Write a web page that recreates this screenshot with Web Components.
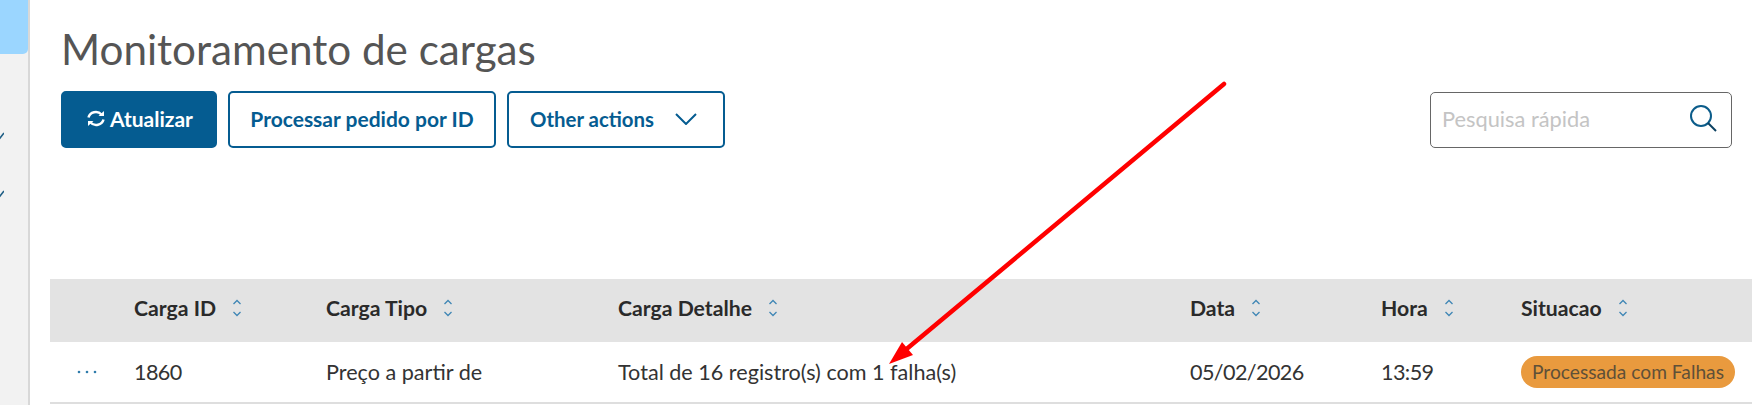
<!DOCTYPE html>
<html lang="pt">
<head>
<meta charset="utf-8">
<title>Monitoramento de cargas</title>
<style>
  html, body { margin: 0; height: 405px; overflow: hidden; background: #fff; }
  body { font-family: Lato, "Open Sans", sans-serif; }
  .num { letter-spacing: -0.6px; }
</style>
</head>
<body>
<app-shell>
  <side-bar slot="side"></side-bar>
  <page-head title-text="Monitoramento de cargas">
    <action-button slot="actions" kind="solid" icon="sync">Atualizar</action-button>
    <action-button slot="actions" wide="268">Processar pedido por ID</action-button>
    <action-button slot="actions" icon="caret" wide="218">Other actions</action-button>
    <search-box slot="search" placeholder="Pesquisa rápida"></search-box>
  </page-head>
  <cargas-table>
    <table-head slot="head">
      <sort-col>Carga ID</sort-col>
      <sort-col>Carga Tipo</sort-col>
      <sort-col>Carga Detalhe</sort-col>
      <sort-col>Data</sort-col>
      <sort-col>Hora</sort-col>
      <sort-col>Situacao</sort-col>
    </table-head>
    <table-row slot="rows">
      <span class="num">1860</span>
      <span>Preço a partir de</span>
      <span>Total de 16 registro(s) com 1 falha(s)</span>
      <span class="num">05/02/2026</span>
      <span class="num">13:59</span>
      <status-badge>Processada com Falhas</status-badge>
    </table-row>
  </cargas-table>
</app-shell>
<red-arrow></red-arrow>

<script>
// columns shared by header and rows
const COLS = '84px 192px 292px 572px 191px 140px 1fr';

class AppShell extends HTMLElement {
  constructor() {
    super();
    this.attachShadow({ mode: 'open' }).innerHTML = `
      <style>
        :host { display: flex; width: 1752px; height: 405px; }
        main { flex: 1; min-width: 0; display: flex; flex-direction: column; padding-left: 20px; }
      </style>
      <slot name="side"></slot>
      <main><slot></slot></main>`;
  }
}

class SideBar extends HTMLElement {
  constructor() {
    super();
    const tick = `<svg width="4" height="8" viewBox="0 0 4 8"><path d="M-4 2 L0 6 L4 1" fill="none" stroke="#1f5f86" stroke-width="1.6"/></svg>`;
    this.attachShadow({ mode: 'open' }).innerHTML = `
      <style>
        :host { display: flex; flex-direction: column; flex: none; box-sizing: border-box; width: 30px; height: 405px;
                background: #f2f2f2; border-right: 2px solid #d8d8d8; }
        .active { height: 54px; background: #9bd6ff; border-bottom-right-radius: 5px; }
        svg { display: block; margin-bottom: 50px; }
        svg:first-of-type { margin-top: 78px; }
      </style>
      <div class="active"></div>${tick}${tick}`;
  }
}

class PageHead extends HTMLElement {
  constructor() {
    super();
    this.attachShadow({ mode: 'open' }).innerHTML = `
      <style>
        :host { display: block; height: 279px; padding: 0 20px 0 11px; box-sizing: border-box; }
        h1 { margin: 0; padding-top: 25px; height: 91px; box-sizing: border-box; font: 400 42.2px/47px Lato, sans-serif; color: #555; }
        .bar { display: flex; justify-content: space-between; }
        .actions { display: flex; gap: 11px; }
      </style>
      <h1></h1>
      <div class="bar">
        <div class="actions"><slot name="actions"></slot></div>
        <slot name="search"></slot>
      </div>`;
    this.shadowRoot.querySelector('h1').textContent = this.getAttribute('title-text');
  }
}

class ActionButton extends HTMLElement {
  constructor() {
    super();
    const icon = this.getAttribute('icon');
    const solid = this.getAttribute('kind') === 'solid';
    const wide = this.getAttribute('wide') || 156;
    let svg = '';
    if (icon === 'sync') {
      svg = `<svg width="22" height="19" viewBox="0 0 22 18" fill="none" stroke="#fff" stroke-width="2.500">
        <path d="M3.5 8 A7.5 7 0 0 1 16.5 5"/><path d="M18.500 10 A7.500 7 0 0 1 5.500 13"/>
        <path d="M13.500 6.500 H19 V1.500 Z" fill="#fff" stroke="none"/><path d="M8.500 11.500 H3 V16.500 Z" fill="#fff" stroke="none"/>
      </svg>`;
    }
    const caret = icon === 'caret'
      ? `<svg width="22" height="12" viewBox="0 0 22 12" fill="none" stroke="#055c91" stroke-width="2"><path d="M1 1 L11 11 L21 1"/></svg>` : '';
    this.attachShadow({ mode: 'open' }).innerHTML = `
      <style>
        :host { display: block; }
        button { box-sizing: border-box; width: ${wide}px; height: 57px; display: flex; align-items: center;
                 justify-content: ${caret ? 'flex-start' : 'center'};
                 gap: ${caret ? 21 : 3}px; padding: 0 0 2px ${caret ? 21 : 0}px; border-radius: 5px; border: 2px solid #055c91; cursor: pointer;
                 font: 700 ${caret ? 20.4 : 21}px Lato, sans-serif;
                 background: ${solid ? '#055c91' : '#fff'}; color: ${solid ? '#fff' : '#055c91'}; }
      </style>
      <button>${svg}<slot></slot>${caret}</button>`;
  }
}

class SearchBox extends HTMLElement {
  constructor() {
    super();
    this.attachShadow({ mode: 'open' }).innerHTML = `
      <style>
        :host { display: flex; box-sizing: border-box; width: 302px; height: 56px; align-items: center; padding: 0 14px 4px 11px;
                border: 1px solid #666; border-radius: 5px; margin-top: 1px; }
        input { flex: 1; min-width: 0; border: 0; outline: 0; padding: 0; font: 400 21.8px Lato, sans-serif; color: #333; }
        input::placeholder { color: #c4c4c4; opacity: 1; }
        svg { flex: none; }
      </style>
      <input>
      <svg width="28" height="28" viewBox="0 0 28 28" fill="none" stroke="#0b5c8a" stroke-width="2">
        <circle cx="12" cy="12" r="10"/><path d="M19 19 L27 27" stroke="#0b4060"/>
      </svg>`;
    this.shadowRoot.querySelector('input').placeholder = this.getAttribute('placeholder');
  }
}

class CargasTable extends HTMLElement {
  constructor() {
    super();
    this.attachShadow({ mode: 'open' }).innerHTML = `
      <style>:host { display: block; }</style>
      <slot name="head"></slot><slot name="rows"></slot>`;
  }
}

class TableHead extends HTMLElement {
  constructor() {
    super();
    this.attachShadow({ mode: 'open' }).innerHTML = `
      <style>
        :host { display: grid; grid-template-columns: ${COLS}; align-items: center; height: 63px; box-sizing: border-box; padding-bottom: 6px;
                background: #e3e3e3; font: 700 21.2px Lato, sans-serif; color: #2a2a2a; }
      </style>
      <span></span><slot></slot>`;
  }
}

class SortCol extends HTMLElement {
  constructor() {
    super();
    this.attachShadow({ mode: 'open' }).innerHTML = `
      <style>
        :host { display: flex; align-items: center; gap: 16px; }
        svg { flex: none; }
      </style>
      <slot></slot>
      <svg width="10" height="18" viewBox="0 0 10 18" fill="none" stroke="#3f86b5" stroke-width="1.300">
        <path d="M1.500 5 L5 1.500 L8.500 5"/><path d="M1.500 13 L5 16.500 L8.500 13"/>
      </svg>`;
  }
}

class TableRow extends HTMLElement {
  constructor() {
    super();
    this.attachShadow({ mode: 'open' }).innerHTML = `
      <style>
        :host { display: grid; grid-template-columns: ${COLS}; align-items: center; height: 62px; box-sizing: border-box; padding-bottom: 1px;
                border-bottom: 2px solid #dedede; font: 400 21.6px Lato, sans-serif; color: #333; }
        svg { display: block; margin-left: 27px; }
      </style>
      <svg width="20" height="4" viewBox="0 0 20 4" fill="#2f7cab">
        <circle cx="2" cy="2" r="1.300"/><circle cx="10" cy="2" r="1.300"/><circle cx="18" cy="2" r="1.300"/>
      </svg>
      <slot></slot>`;
  }
}

class StatusBadge extends HTMLElement {
  constructor() {
    super();
    this.attachShadow({ mode: 'open' }).innerHTML = `
      <style>
        :host { display: inline-flex; align-items: center; justify-content: center; box-sizing: border-box; width: 214px; height: 32px;
                background: #e99a3e; border-radius: 16px; font: 400 19.200px Lato, sans-serif; color: #5f5038; white-space: nowrap; }
      </style>
      <slot></slot>`;
  }
}

class RedArrow extends HTMLElement {
  constructor() {
    super();
    this.attachShadow({ mode: 'open' }).innerHTML = `
      <style>:host { position: absolute; left: 0; top: 0; width: 1752px; height: 405px; pointer-events: none; }</style>
      <svg width="1752" height="405" viewBox="0 0 1752 405">
        <path d="M1224 84 L903 352" fill="none" stroke="#ff0000" stroke-width="4.500" stroke-linecap="round"/>
        <path d="M889 364 L902 342 L913 355 Z" fill="#ff0000"/>
      </svg>`;
  }
}

customElements.define('app-shell', AppShell);
customElements.define('side-bar', SideBar);
customElements.define('page-head', PageHead);
customElements.define('action-button', ActionButton);
customElements.define('search-box', SearchBox);
customElements.define('cargas-table', CargasTable);
customElements.define('table-head', TableHead);
customElements.define('sort-col', SortCol);
customElements.define('table-row', TableRow);
customElements.define('status-badge', StatusBadge);
customElements.define('red-arrow', RedArrow);
</script>
</body>
</html>
